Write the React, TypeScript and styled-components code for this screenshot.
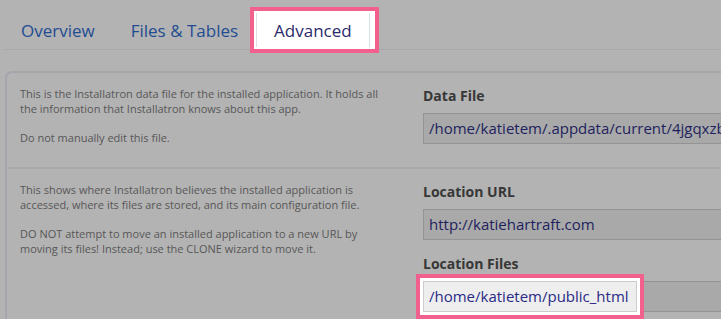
import React from 'react';
import styled, { createGlobalStyle } from 'styled-components';

const GlobalStyle = createGlobalStyle`
  html, body {
    margin: 0;
    padding: 0;
    background: #b3b3b3;
    overflow: hidden;
  }
  body {
    font-family: "Open Sans", "DejaVu Sans", sans-serif;
  }
`;

const PINK = '#f2608e';

const Page = styled.div`
  width: 721px;
  height: 319px;
  overflow: hidden;
  padding-left: 5px;
  box-sizing: border-box;
`;

const TabBar = styled.div`
  display: flex;
  align-items: flex-end;
  height: 49px;
  border-bottom: 1px solid #a6a6ac;
`;

const Tab = styled.div<{ $active?: boolean }>`
  display: flex;
  align-items: center;
  padding: 0 17px;
  font-size: 17px;
  white-space: nowrap;
  height: ${(p) => (p.$active ? '34px' : '38px')};
  margin-bottom: ${(p) => (p.$active ? '2px' : '0')};
  color: ${(p) => (p.$active ? '#2b2b6b' : '#224c92')};
  background: ${(p) => (p.$active ? '#fff' : 'transparent')};
  border-left: 1px solid ${(p) => (p.$active ? '#dcdfe6' : 'transparent')};
  border-right: 1px solid ${(p) => (p.$active ? '#dcdfe6' : 'transparent')};
  box-shadow: ${(p) =>
    p.$active
      ? `0 0 0 2px #fff, 3px 0 0 2px #fff, 0 0 0 6px ${PINK}, 3px 0 0 6px ${PINK}`
      : 'none'};
  &:first-child {
    padding-left: 15px;
  }
`;

const Panel = styled.div`
  margin-top: 21px;
  width: 760px;
  border: 2px solid #a5a5ac;
  border-right: none;
  border-radius: 7px 0 0 0;
`;

const Section = styled.div`
  display: grid;
  grid-template-columns: 416px 1fr;
  & + & {
    border-top: 2px solid #a8a8ad;
  }
`;

const Help = styled.div`
  padding: 13px 0 14px 13px;
  width: 368px;
  font-size: 11px;
  line-height: 15px;
  color: #575757;
  & > p {
    margin: 0 0 14px;
  }
  & > p:last-child {
    margin-bottom: 0;
  }
`;

const Fields = styled.div`
  display: flex;
  flex-direction: column;
  gap: 14px;
  padding: 13px 0 23px;
`;

const Field = styled.div`
  display: flex;
  flex-direction: column;
  gap: 7px;
`;

const Label = styled.div`
  font-size: 14px;
  font-weight: 700;
  line-height: 20px;
  color: #373737;
`;

const Input = styled.div`
  display: flex;
  height: 29px;
  border: 1px solid #939393;
  background: #a9a9a9;
  font-size: 15px;
  line-height: 29px;
  color: #1e1f5e;
  white-space: nowrap;
`;

const Value = styled.span`
  padding-left: 5px;
`;

const Spotlight = styled.div`
  margin: -1px 0 -1px -1px;
  width: 207px;
  padding-left: 5px;
  border: 1px solid #cccccc;
  background: #eeeeee;
  color: #2a2a86;
  box-shadow: 0 0 0 3px #fff, 0 0 0 7px ${PINK};
`;

export default function App() {
  return (
    <>
      <GlobalStyle />
      <Page>
        <TabBar>
          <Tab>Overview</Tab>
          <Tab>Files &amp; Tables</Tab>
          <Tab $active>Advanced</Tab>
        </TabBar>
        <Panel>
          <Section>
            <Help>
              <p>
                This is the Installatron data file for the installed application. It holds all the
                information that Installatron knows about this app.
              </p>
              <p>Do not manually edit this file.</p>
            </Help>
            <Fields>
              <Field>
                <Label>Data File</Label>
                <Input>
                  <Value>/home/katietem/.appdata/current/4jgqxzb5d8kc4wgc</Value>
                </Input>
              </Field>
            </Fields>
          </Section>
          <Section>
            <Help>
              <p>
                This shows where Installatron believes the installed application is accessed, where
                its files are stored, and its main configuration file.
              </p>
              <p>
                DO NOT attempt to move an installed application to a new URL by moving its files!
                Instead; use the CLONE wizard to move it.
              </p>
            </Help>
            <Fields>
              <Field>
                <Label>Location URL</Label>
                <Input>
                  <Value>http://katiehartraft.com</Value>
                </Input>
              </Field>
              <Field>
                <Label>Location Files</Label>
                <Input>
                  <Spotlight>/home/katietem/public_html</Spotlight>
                </Input>
              </Field>
            </Fields>
          </Section>
        </Panel>
      </Page>
    </>
  );
}
